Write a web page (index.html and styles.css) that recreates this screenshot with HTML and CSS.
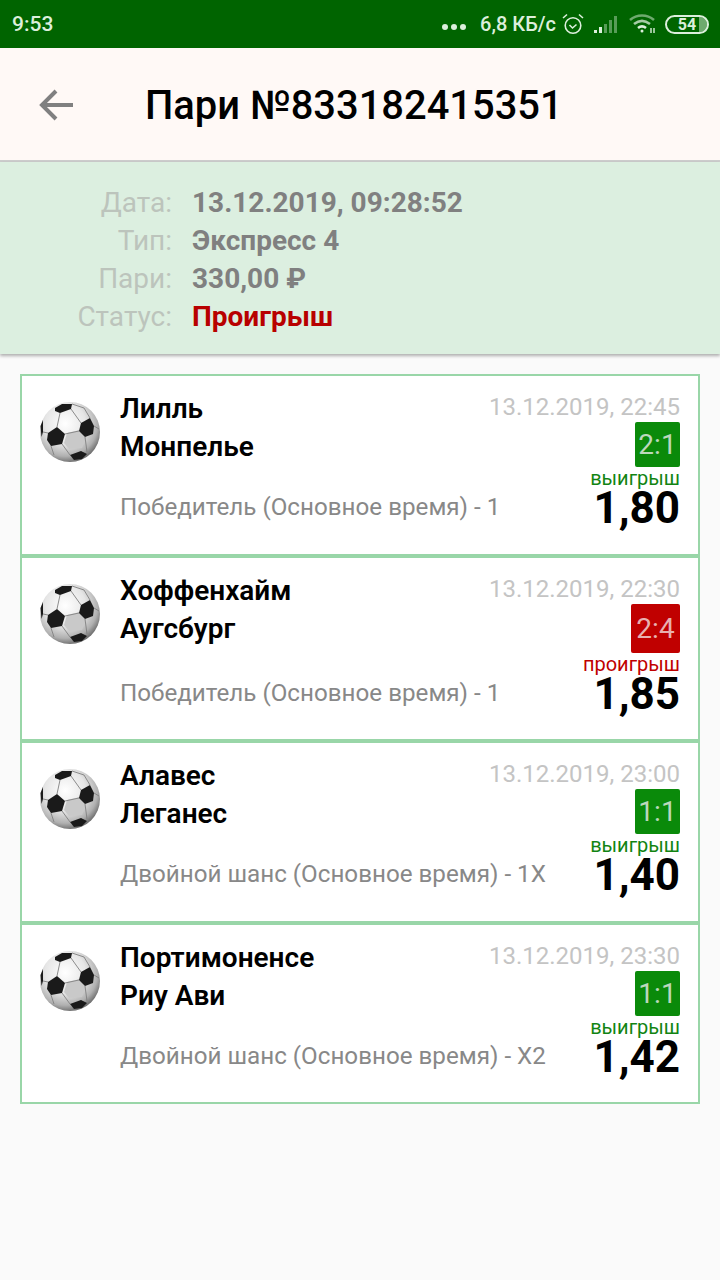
FILE: index.html
```html
<!DOCTYPE html>
<html>
<head>
    <title>Пари</title>
    <meta charset="utf-8">
    <link rel="stylesheet" href="styles.css">
</head>
<body>
    <svg class="sprite" width="0" height="0">
        <defs>
            <radialGradient id="ballShade" cx="42%" cy="36%" r="68%">
                <stop offset="0" stop-color="#ffffff"/>
                <stop offset="0.5" stop-color="#e6e6e6"/>
                <stop offset="0.8" stop-color="#b0b0b0"/>
                <stop offset="1" stop-color="#5e5e5e"/>
            </radialGradient>
            <symbol id="ball" viewBox="0 0 60 60">
                <circle cx="30" cy="30" r="30" fill="url(#ballShade)"/>
                <path d="M27 31 L40 28 L46 36 L42 46 L29 47 L24 41 Z" fill="#c9c9c9"/>
                <g fill="none" stroke="#808080" stroke-width="0.9">
                    <path d="M20 11 L17 25 M31 7 L41 21 M25 32 L39 29 M45 35 L47 50 M22 42 L30 53 M11 44 L14 53 M32 2 L44 6 L50 16 M54 24 L59 27 M3 30 L8 31"/>
                </g>
                <g fill="#1a1a1a">
                    <path d="M15 6 L22 2 L32 2 L31 7 L20 11 L15 9 Z"/>
                    <path d="M41 21 L50 16 L54 24 L53 32 L45 35 L39 29 Z"/>
                    <path d="M8 31 L17 25 L25 32 L22 42 L11 44 L7 38 Z"/>
                    <path d="M30 53 L41 49 L47 52 L42 57 L34 58 Z"/>
                    <path d="M0.500 24 L3 18 L3 30 L1.500 35 Z"/>
                </g>
            </symbol>
        </defs>
    </svg>

    <div class="status-bar">
        <span class="status-time">9:53</span>
        <div class="status-right">
            <span class="status-dots"><i></i><i></i><i></i></span>
            <span class="status-speed">6,8 КБ/с</span>
            <svg class="status-alarm" width="22" height="22" viewBox="0 0 22 22" fill="none" stroke="#dcefdc" stroke-width="1.600">
                <circle cx="11" cy="12.500" r="7.800"/>
                <path d="M7.500 12 L10.500 15 L14.500 11.500"/>
                <path d="M1 5 L5 1.500 M21 5 L17 1.500"/>
            </svg>
            <svg class="status-signal" width="25" height="18" viewBox="0 0 25 18" fill="#dcefdc">
                <rect x="0" y="14" width="3" height="3"/>
                <rect x="5" y="11" width="3" height="6"/>
                <rect x="10" y="8" width="3" height="9" opacity="0.4"/>
                <rect x="15" y="4" width="3" height="13" opacity="0.4"/>
                <rect x="20" y="0" width="3" height="17" opacity="0.4"/>
            </svg>
            <svg class="status-wifi" width="28" height="20" viewBox="0 0 28 20" fill="none" stroke="#dcefdc" stroke-width="2.600">
                <path d="M1 6 C8 0 18 0 25 6" opacity="0.5"/>
                <path d="M5 10 C10 6 16 6 21 10" opacity="0.75"/>
                <path d="M9 14 C11.500 12 14.500 12 17 14"/>
                <circle cx="13" cy="17" r="1.500" fill="#dcefdc" stroke="none"/>
                <path d="M22 14 V19 M25 14 V19" stroke-width="1.400"/>
            </svg>
            <span class="battery"><span class="battery-level"></span><span class="battery-num">54</span></span>
        </div>
    </div>

    <div class="toolbar">
        <svg class="back" width="36" height="32" viewBox="0 0 36 32" fill="none" stroke="#808080" stroke-width="4">
            <path d="M34 16 H4"/>
            <path d="M17 2 L3 16 L17 30"/>
        </svg>
        <h1 class="toolbar-title">Пари №833182415351</h1>
    </div>

    <div class="summary">
        <div class="summary-label">Дата:</div><div class="summary-value">13.12.2019, 09:28:52</div>
        <div class="summary-label">Тип:</div><div class="summary-value">Экспресс 4</div>
        <div class="summary-label">Пари:</div><div class="summary-value">330,00 ₽</div>
        <div class="summary-label">Статус:</div><div class="summary-value lost">Проигрыш</div>
    </div>

    <div class="bets">
        <div class="bet">
            <svg class="ball" width="60" height="60"><use href="#ball"/></svg>
            <div class="bet-main">
                <div class="team">Лилль</div>
                <div class="team">Монпелье</div>
                <div class="market">Победитель (Основное время) - 1</div>
            </div>
            <div class="bet-side">
                <div class="bet-date">13.12.2019, 22:45</div>
                <div class="score won">2:1</div>
                <div class="result won-text">выигрыш</div>
                <div class="coef">1,80</div>
            </div>
        </div>
        <div class="bet">
            <svg class="ball" width="60" height="60"><use href="#ball"/></svg>
            <div class="bet-main">
                <div class="team">Хоффенхайм</div>
                <div class="team">Аугсбург</div>
                <div class="market">Победитель (Основное время) - 1</div>
            </div>
            <div class="bet-side">
                <div class="bet-date">13.12.2019, 22:30</div>
                <div class="score lost-box">2:4</div>
                <div class="result lost-text">проигрыш</div>
                <div class="coef">1,85</div>
            </div>
        </div>
        <div class="bet">
            <svg class="ball" width="60" height="60"><use href="#ball"/></svg>
            <div class="bet-main">
                <div class="team">Алавес</div>
                <div class="team">Леганес</div>
                <div class="market">Двойной шанс (Основное время) - 1X</div>
            </div>
            <div class="bet-side">
                <div class="bet-date">13.12.2019, 23:00</div>
                <div class="score won">1:1</div>
                <div class="result won-text">выигрыш</div>
                <div class="coef">1,40</div>
            </div>
        </div>
        <div class="bet">
            <svg class="ball" width="60" height="60"><use href="#ball"/></svg>
            <div class="bet-main">
                <div class="team">Портимоненсе</div>
                <div class="team">Риу Ави</div>
                <div class="market">Двойной шанс (Основное время) - X2</div>
            </div>
            <div class="bet-side">
                <div class="bet-date">13.12.2019, 23:30</div>
                <div class="score won">1:1</div>
                <div class="result won-text">выигрыш</div>
                <div class="coef">1,42</div>
            </div>
        </div>
    </div>
</body>
</html>
```

FILE: styles.css
```css
body {
    margin: 0;
    height: 1280px;
    overflow: hidden;
    background-color: #fafafa;
    font-family: Roboto, "Noto Sans", sans-serif;
}
.sprite {
    display: block;
    height: 0;
}
.status-bar {
    height: 48px;
    padding: 0 11px 0 12px;
    box-sizing: border-box;
    background-color: #006400;
    color: #dcefdc;
    display: flex;
    align-items: center;
    justify-content: space-between;
    font-size: 20px;
    font-weight: 500;
}
.status-time {
    font-size: 21px;
}
.status-right {
    display: flex;
    align-items: center;
}
.status-dots {
    display: flex;
    gap: 3px;
    margin-right: 14px;
    margin-top: 6px;
}
.status-dots i {
    width: 6px;
    height: 6px;
    border-radius: 50%;
    background-color: #dcefdc;
}
.status-alarm {
    display: block;
    margin-left: 6px;
}
.status-signal {
    display: block;
    margin-left: 10px;
    margin-top: 2px;
}
.status-wifi {
    display: block;
    margin-left: 10px;
}
.battery {
    position: relative;
    width: 40px;
    height: 15px;
    margin-left: 8px;
    border: 2px solid #dcefdc;
    border-radius: 10px;
    overflow: hidden;
    font-size: 16px;
    line-height: 15px;
    text-align: center;
}
.battery-level {
    position: absolute;
    right: 0;
    top: 0;
    bottom: 0;
    width: 20%;
    background-color: #dcefdc;
    opacity: 0.5;
}
.battery-num {
    position: relative;
    font-weight: 700;
}
.toolbar {
    height: 110px;
    padding-top: 2px;
    background-color: #fff9f6;
    border-bottom: 2px solid #cccccc;
    display: flex;
    align-items: center;
}
.back {
    margin-left: 39px;
}
.toolbar-title {
    margin: 0 0 0 70px;
    font-size: 39.900px;
    font-weight: 500;
    color: #000;
}
.summary {
    height: 192px;
    padding-top: 21px;
    box-sizing: border-box;
    background-color: #dcefe0;
    box-shadow: 0 2px 3px rgba(0, 0, 0, 0.3);
    display: grid;
    grid-template-columns: 172px 1fr;
    grid-auto-rows: 38px;
    column-gap: 20px;
    align-items: center;
    font-size: 28px;
}
.summary-label {
    text-align: right;
    color: #bcc4bc;
}
.summary-value {
    color: #808080;
    font-weight: 700;
}
.summary-value.lost {
    color: #b80000;
}
.bets {
    margin: 20px 20px 0;
}
.bet {
    border: 2px solid #99d6a8;
    background-color: #fff;
    display: flex;
    padding: 12px 18px 26.500px 18px;
}
.ball {
    flex: none;
    margin-top: 14px;
}
.bet-main {
    flex: 1;
    min-width: 0;
    margin-left: 20px;
    padding-top: 2px;
    display: flex;
    flex-direction: column;
}
.team {
    font-size: 28px;
    font-weight: 600;
    line-height: 38px;
    color: #000;
}
.market {
    margin-top: auto;
    margin-bottom: 5px;
    font-size: 24.200px;
    line-height: 30px;
    white-space: nowrap;
    color: #888;
}
.bet-side {
    flex: none;
    display: flex;
    flex-direction: column;
    align-items: flex-end;
}
.bet-date {
    padding-top: 4px;
    font-size: 24px;
    line-height: 30px;
    color: #c4c4c4;
}
.score {
    width: 45px;
    height: 45px;
    border-radius: 2px;
    font-size: 28px;
    line-height: 45px;
    text-align: center;
    color: #bcd8bc;
}
.score.won {
    background-color: #0a8a0a;
}
.score.lost-box {
    width: 49px;
    height: 49px;
    line-height: 49px;
    background-color: #c00000;
    color: #e8b0b0;
}
.result {
    font-size: 20px;
    line-height: 22px;
}
.won-text {
    color: #128412;
}
.lost-text {
    color: #c00000;
}
.coef {
    font-size: 44px;
    font-weight: 700;
    line-height: 38px;
    color: #000;
}
```
